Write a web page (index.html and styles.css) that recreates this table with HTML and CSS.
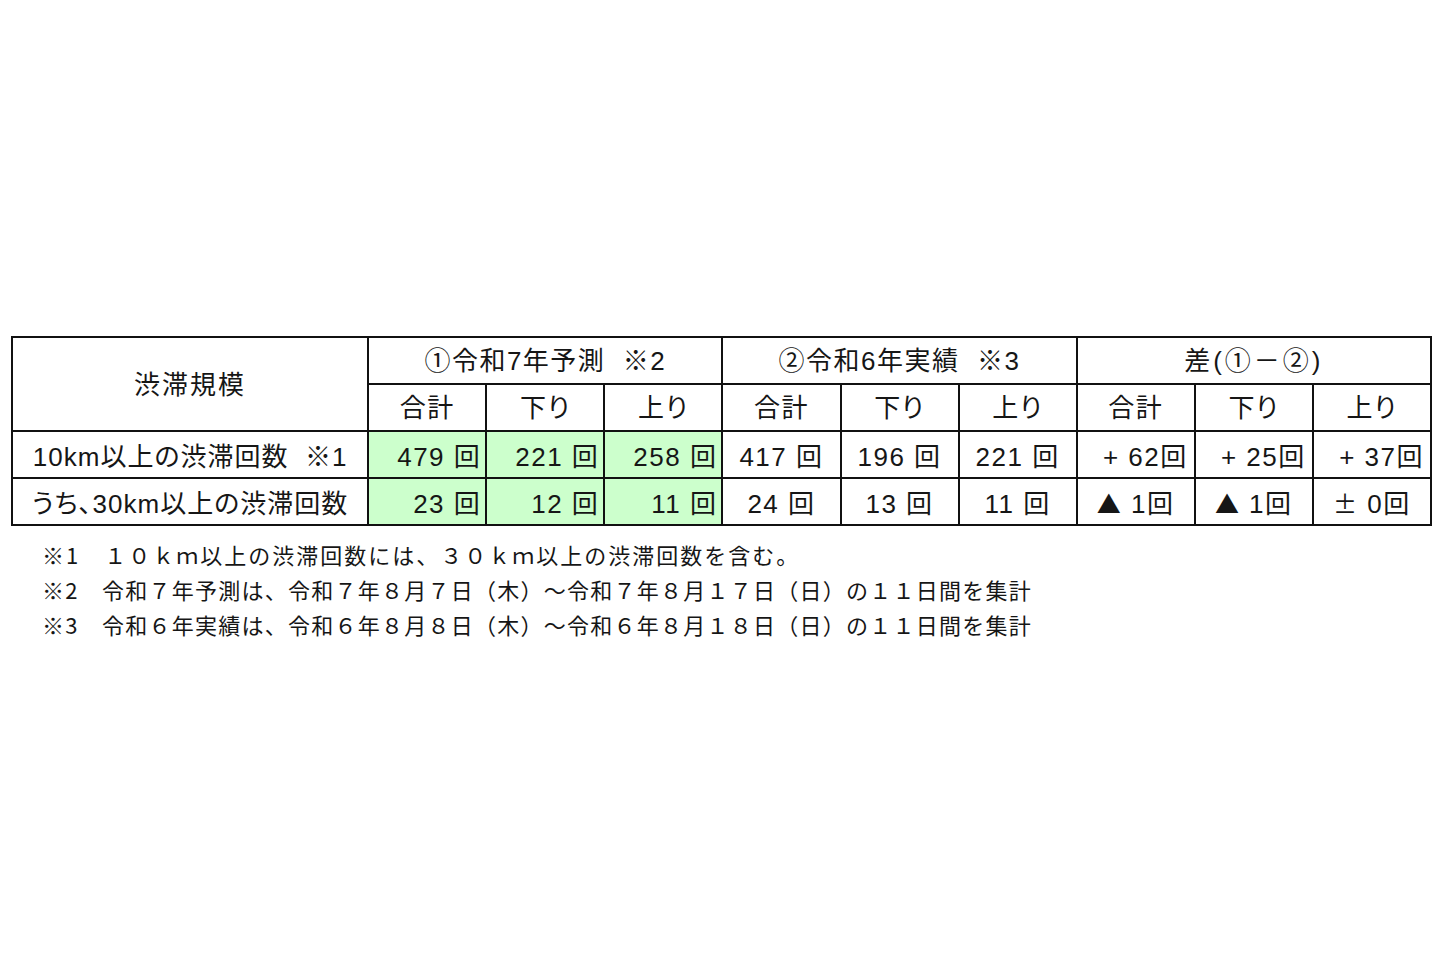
FILE: index.html
```html
<!DOCTYPE html>
<html lang="ja">
<head>
<meta charset="utf-8">
<title>渋滞予測</title>
<link rel="stylesheet" href="styles.css">
</head>
<body>
<div class="page">
  <table class="grid">
    <colgroup>
      <col class="c-label">
      <col class="c-num"><col class="c-num"><col class="c-num">
      <col class="c-num"><col class="c-num"><col class="c-num">
      <col class="c-num"><col class="c-num"><col class="c-num">
    </colgroup>
    <tr class="row head">
      <th rowspan="2" class="label-head">渋滞規模</th>
      <th colspan="3">①令和7年予測&nbsp;&nbsp;※2</th>
      <th colspan="3">②令和6年実績&nbsp;&nbsp;※3</th>
      <th colspan="3" class="diff-head">差(①－②)</th>
    </tr>
    <tr class="row head">
      <th>合計</th><th>下り</th><th>上り</th>
      <th>合計</th><th>下り</th><th>上り</th>
      <th>合計</th><th>下り</th><th>上り</th>
    </tr>
    <tr class="row body">
      <td class="label">10km以上の渋滞回数&nbsp;&nbsp;※1</td>
      <td class="green">479 回</td>
      <td class="green">221 回</td>
      <td class="green">258 回</td>
      <td>417 回</td>
      <td>196 回</td>
      <td>221 回</td>
      <td class="right">+ 62回</td>
      <td class="right">+ 25回</td>
      <td class="right">+ 37回</td>
    </tr>
    <tr class="row body">
      <td class="label">うち、30km以上の渋滞回数</td>
      <td class="green">23 回</td>
      <td class="green">12 回</td>
      <td class="green">11 回</td>
      <td>24 回</td>
      <td>13 回</td>
      <td>11 回</td>
      <td><span class="sym">▲</span> 1回</td>
      <td><span class="sym">▲</span> 1回</td>
      <td><span class="sym">±</span> 0回</td>
    </tr>
  </table>
  <div class="notes">
    <p class="note-wide">※1　１０ｋｍ以上の渋滞回数には、３０ｋｍ以上の渋滞回数を含む。</p>
    <p>※2　令和７年予測は、令和７年８月７日（木）～令和７年８月１７日（日）の１１日間を集計</p>
    <p>※3　令和６年実績は、令和６年８月８日（木）～令和６年８月１８日（日）の１１日間を集計</p>
  </div>
</div>
</body>
</html>
```

FILE: styles.css
```css
html, body {
  margin: 0;
  padding: 0;
  background: #ffffff;
}

.page {
  padding: 336px 0 0 11px;
  font-family: "Liberation Sans", "Noto Sans CJK JP", sans-serif;
  color: #161616;
}

.grid {
  border-collapse: collapse;
  table-layout: fixed;
  width: 1421px;
  font-size: 26px;
  font-feature-settings: "palt";
}

.c-label { width: 356px; }
.c-num { width: 118px; }

.row { height: 47px; }

.grid th,
.grid td {
  border: 2px solid #111;
  padding: 0 4px;
  font-weight: 400;
  text-align: center;
  vertical-align: middle;
  white-space: nowrap;
  letter-spacing: 1.5px;
  line-height: 1;
}

.grid .head th {
  padding-top: 1px;
}

.grid .body td {
  padding-top: 4px;
}

.grid .label-head {
  letter-spacing: 2px;
}

.grid .diff-head {
  letter-spacing: 3px;
}

.grid .label {
  letter-spacing: 1px;
}

.grid .green {
  background: #ccffcc;
  text-align: right;
  padding-right: 4px;
}

.grid .right {
  text-align: right;
  padding-right: 6px;
}

.sym {
  font-family: "Noto Sans CJK JP", sans-serif;
  font-size: 24px;
}

.notes {
  margin: 11px 0 0 31px;
  font-family: "Noto Sans CJK JP", sans-serif;
  font-size: 22px;
  letter-spacing: 1.25px;
  color: #161616;
}

.notes p {
  margin: 0;
  line-height: 35px;
  white-space: nowrap;
}

.notes .note-wide {
  letter-spacing: 2px;
}
```
